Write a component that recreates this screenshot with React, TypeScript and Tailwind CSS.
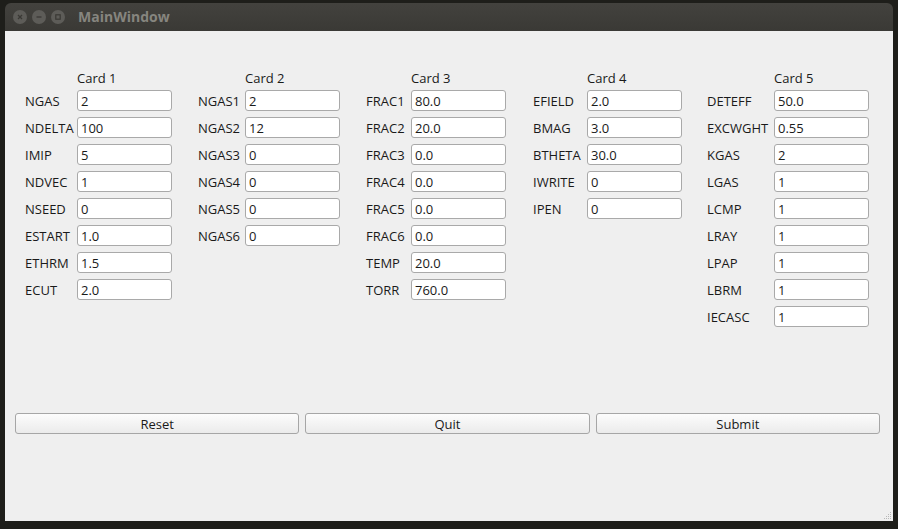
import React from "react";

type Card = { title: string; labelW: number; gapL: number; rows: [string, string][] };

const cards: Card[] = [
  {
    title: "Card 1",
    labelW: 52,
    gapL: 0,
    rows: [
      ["NGAS", "2"],
      ["NDELTA", "100"],
      ["IMIP", "5"],
      ["NDVEC", "1"],
      ["NSEED", "0"],
      ["ESTART", "1.0"],
      ["ETHRM", "1.5"],
      ["ECUT", "2.0"],
    ],
  },
  {
    title: "Card 2",
    labelW: 47,
    gapL: 26,
    rows: [
      ["NGAS1", "2"],
      ["NGAS2", "12"],
      ["NGAS3", "0"],
      ["NGAS4", "0"],
      ["NGAS5", "0"],
      ["NGAS6", "0"],
    ],
  },
  {
    title: "Card 3",
    labelW: 45,
    gapL: 26,
    rows: [
      ["FRAC1", "80.0"],
      ["FRAC2", "20.0"],
      ["FRAC3", "0.0"],
      ["FRAC4", "0.0"],
      ["FRAC5", "0.0"],
      ["FRAC6", "0.0"],
      ["TEMP", "20.0"],
      ["TORR", "760.0"],
    ],
  },
  {
    title: "Card 4",
    labelW: 54,
    gapL: 27,
    rows: [
      ["EFIELD", "2.0"],
      ["BMAG", "3.0"],
      ["BTHETA", "30.0"],
      ["IWRITE", "0"],
      ["IPEN", "0"],
    ],
  },
  {
    title: "Card 5",
    labelW: 67,
    gapL: 25,
    rows: [
      ["DETEFF", "50.0"],
      ["EXCWGHT", "0.55"],
      ["KGAS", "2"],
      ["LGAS", "1"],
      ["LCMP", "1"],
      ["LRAY", "1"],
      ["LPAP", "1"],
      ["LBRM", "1"],
      ["IECASC", "1"],
    ],
  },
];

function CardCol({ card }: { card: Card }) {
  return (
    <div className="flex flex-col" style={{ marginLeft: card.gapL }}>
      <div className="h-[16px] leading-[16px] mb-[4px]" style={{ paddingLeft: card.labelW }}>
        {card.title}
      </div>
      <div className="flex flex-col gap-[6px]">
        {card.rows.map(([l, v]) => (
          <div key={l} className="flex items-center h-[21px]">
            <div className="shrink-0 leading-[16px]" style={{ width: card.labelW }}>
              {l}
            </div>
            <div className="w-[95px] h-[21px] bg-white border border-[#a9a9a9] rounded-[3px] pl-[3px] flex items-center leading-[16px]">
              {v}
            </div>
          </div>
        ))}
      </div>
    </div>
  );
}

function Btn({ label }: { label: string }) {
  return (
    <div className="flex-1 h-[21px] rounded-[3px] border border-[#a6a6a6] bg-gradient-to-b from-[#fcfcfc] to-[#ebebeb] flex items-center justify-center leading-[16px]">
      {label}
    </div>
  );
}

export default function App() {
  return (
    <div
      className="w-[898px] h-[529px] bg-[#1e1e1a] pt-[3px] pl-[5px] overflow-hidden text-[13px] text-[#1a1a1a]"
      style={{ fontFamily: '"Open Sans", "Noto Sans", sans-serif' }}
    >
      <div className="w-[888px] flex flex-col">
        <div className="h-[28px] rounded-t-[6px] bg-gradient-to-b from-[#43423e] to-[#3a3935] flex items-center pl-[8px]">
          <div className="flex items-center gap-[5px]">
            <div className="w-[14px] h-[14px] rounded-full bg-[#5d5c58] flex items-center justify-center">
              <svg width="8" height="8" viewBox="0 0 8 8">
                <path d="M2 2L6 6M6 2L2 6" stroke="#3a3935" strokeWidth="1.3" />
              </svg>
            </div>
            <div className="w-[14px] h-[14px] rounded-full bg-[#5d5c58] flex items-center justify-center">
              <svg width="8" height="8" viewBox="0 0 8 8">
                <path d="M1.5 4H6.5" stroke="#3a3935" strokeWidth="1.3" />
              </svg>
            </div>
            <div className="w-[14px] h-[14px] rounded-full bg-[#5d5c58] flex items-center justify-center">
              <svg width="8" height="8" viewBox="0 0 8 8">
                <rect x="1.8" y="1.8" width="4.4" height="4.4" fill="none" stroke="#3a3935" strokeWidth="1.2" />
              </svg>
            </div>
          </div>
          <div className="ml-[13px] text-[14px] font-bold text-[#86857f] leading-[18px]">MainWindow</div>
        </div>
        <div className="h-[490px] bg-[#efefef] flex flex-col relative">
          <div className="pt-[39px] pl-[20px] flex items-start">
            {cards.map((c) => (
              <CardCol key={c.title} card={c} />
            ))}
          </div>
          <div className="mt-[86px] pl-[10px] pr-[13px] flex gap-[6px]">
            <Btn label="Reset" />
            <Btn label="Quit" />
            <Btn label="Submit" />
          </div>
          <div className="absolute right-[1px] bottom-[1px] w-[9px] h-[9px]">
            <svg width="9" height="9" viewBox="0 0 9 9">
              {[
                [7, 1],
                [5, 3],
                [7, 3],
                [3, 5],
                [5, 5],
                [7, 5],
                [1, 7],
                [3, 7],
                [5, 7],
                [7, 7],
              ].map(([x, y], i) => (
                <rect key={i} x={x} y={y} width="1" height="1" fill="#b8b8b8" />
              ))}
            </svg>
          </div>
        </div>
      </div>
    </div>
  );
}
